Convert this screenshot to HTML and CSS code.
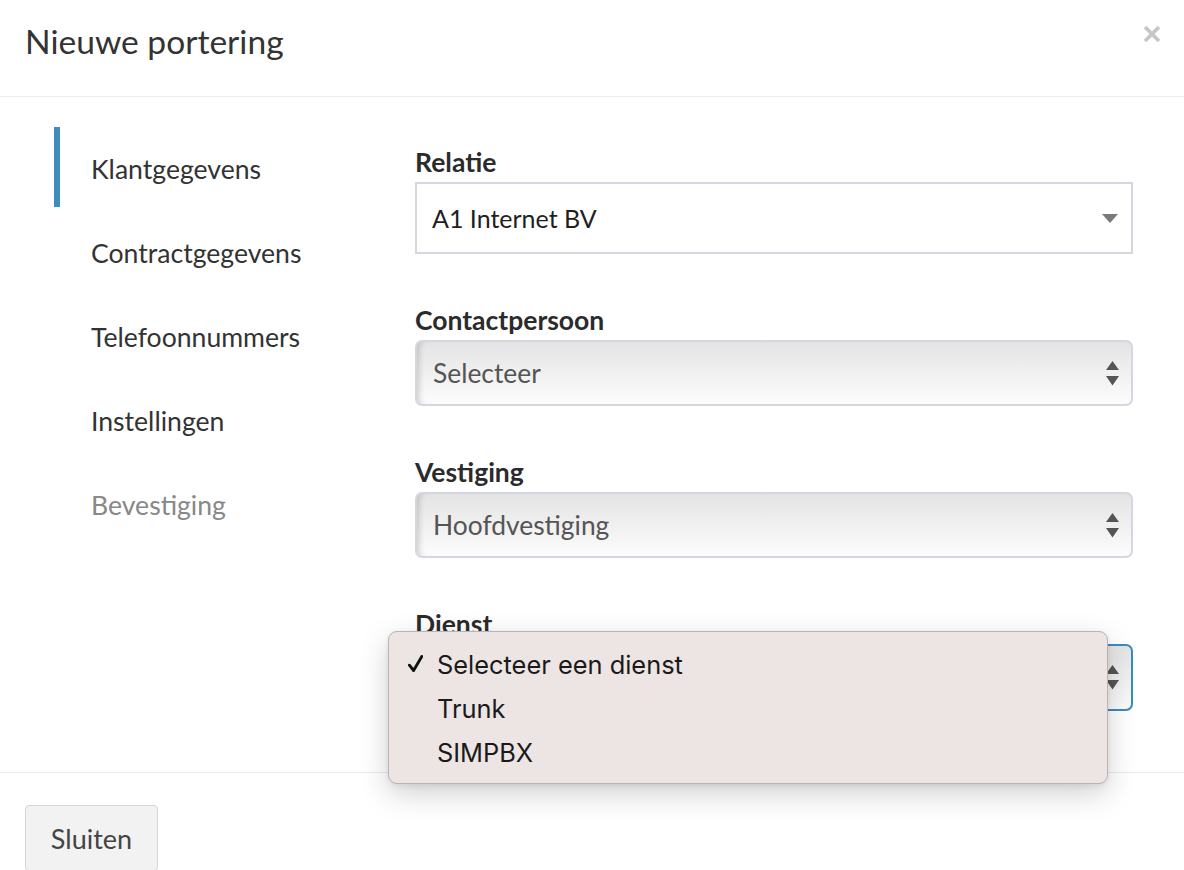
FILE: index.html
```html
<!DOCTYPE html>
<html lang="nl">
<head>
<meta charset="utf-8">
<title>Nieuwe portering</title>
<link rel="stylesheet" href="styles.css">
</head>
<body>
<div class="modal">
  <header class="modal-header">
    <h1 class="modal-title">Nieuwe portering</h1>
    <button class="close" type="button" aria-label="Sluiten">
      <svg viewBox="0 0 18 18" width="18" height="18"><path d="M2 2 L16 16 M16 2 L2 16" stroke="#c6c6c6" stroke-width="3.6" stroke-linecap="butt"/></svg>
    </button>
  </header>
  <div class="modal-body">
    <ul class="steps">
      <li class="step active">Klantgegevens</li>
      <li class="step">Contractgegevens</li>
      <li class="step">Telefoonnummers</li>
      <li class="step">Instellingen</li>
      <li class="step disabled">Bevestiging</li>
    </ul>
    <form class="form">
      <div class="field">
        <label class="label">Relatie</label>
        <div class="select select-plain">
          <span>A1 Internet BV</span>
          <svg class="caret" viewBox="0 0 16 9" width="16" height="9"><path d="M0 0 H16 L8 9 Z" fill="#7a7a7a"/></svg>
        </div>
      </div>
      <div class="field">
        <label class="label">Contactpersoon</label>
        <div class="select select-native">
          <span>Selecteer</span>
          <svg class="updown" viewBox="0 0 13 25" width="13" height="25"><path d="M6.5 0 L13 9 H0 Z M0 15 H13 L6.5 24.5 Z" fill="#555"/></svg>
        </div>
      </div>
      <div class="field">
        <label class="label">Vestiging</label>
        <div class="select select-native">
          <span>Hoofdvestiging</span>
          <svg class="updown" viewBox="0 0 13 25" width="13" height="25"><path d="M6.5 0 L13 9 H0 Z M0 15 H13 L6.5 24.5 Z" fill="#555"/></svg>
        </div>
      </div>
      <div class="field">
        <label class="label">Dienst</label>
        <div class="anchor">
          <div class="select select-native select-focus">
            <span></span>
            <svg class="updown" viewBox="0 0 13 25" width="13" height="25"><path d="M6.5 0 L13 9 H0 Z M0 15 H13 L6.5 24.5 Z" fill="#555"/></svg>
          </div>
          <ul class="menu">
            <li class="menu-item checked">
              <svg class="check" viewBox="0 0 15 17" width="15" height="17"><path d="M1.4 10.2 L5.6 15.5 L13.8 1.5" fill="none" stroke="#111" stroke-width="2.9" stroke-linejoin="round" stroke-linecap="round"/></svg>
              Selecteer een dienst
            </li>
            <li class="menu-item">Trunk</li>
            <li class="menu-item">SIMPBX</li>
          </ul>
        </div>
      </div>
    </form>
  </div>
  <footer class="modal-footer">
    <button class="btn" type="button">Sluiten</button>
  </footer>
</div>
</body>
</html>
```

FILE: styles.css
```css
html, body {
  margin: 0;
  padding: 0;
  background: #fff;
}

body {
  font-family: Lato, "Liberation Sans", sans-serif;
  color: #333;
}

.modal {
  width: 1184px;
}

.modal-header {
  display: flex;
  justify-content: space-between;
  align-items: flex-start;
  height: 97px;
  box-sizing: border-box;
  padding: 21px 23px 0 25px;
  border-bottom: 1px solid #ececec;
}

.modal-title {
  margin: 0;
  font-size: 33.6px;
  line-height: 40px;
  font-weight: 400;
  color: #333;
}

.close {
  margin-top: 4px;
  padding: 0;
  border: 0;
  background: none;
  width: 18px;
  height: 18px;
  display: block;
}

.close svg {
  display: block;
}

.modal-body {
  display: grid;
  grid-template-columns: 415px 1fr;
  padding-right: 51px;
}

.steps {
  list-style: none;
  margin: 0;
  padding: 30px 0 0 54px;
}

.step {
  height: 80px;
  line-height: 84px;
  margin-bottom: 4px;
  padding-left: 31px;
  border-left: 6px solid transparent;
  font-size: 26.6px;
  color: #333;
}

.step.active {
  border-left-color: #3f8dbf;
}

.step.disabled {
  color: #888;
}

.form {
  margin: 0;
  padding: 50px 0 61px;
}

.field + .field {
  margin-top: 51px;
}

.label {
  display: block;
  font-size: 26.5px;
  line-height: 30px;
  font-weight: 700;
  color: #2b2b2b;
  margin-bottom: 5px;
}

.select {
  box-sizing: border-box;
  display: flex;
  align-items: center;
  justify-content: space-between;
}

.select-plain {
  height: 72px;
  border: 2px solid #d4d7df;
  padding: 0 13px 0 15px;
  font-size: 25px;
  color: #1f1f1f;
  background: #fff;
}

.select-native {
  height: 66px;
  border: 2px solid #d4d7df;
  border-radius: 7px;
  padding: 0 12px 0 16px;
  background: linear-gradient(#e4e4e4, #fcfcfc);
  box-shadow: inset 7px 0 6px -5px rgba(0, 0, 0, 0.18);
  font-size: 26.4px;
  color: #555;
}

.select-focus {
  height: 67px;
  border-color: #3b8bc1;
}

.caret,
.updown {
  display: block;
  flex: none;
}

.anchor {
  position: relative;
}

.menu {
  position: absolute;
  left: -27px;
  top: -13px;
  width: 720px;
  box-sizing: border-box;
  margin: 0;
  padding: 11px 0 8px;
  list-style: none;
  background: #ede5e4;
  border: 1px solid #b9b3b2;
  border-radius: 9px;
  box-shadow: 0 10px 30px rgba(0, 0, 0, 0.18), 0 2px 6px rgba(0, 0, 0, 0.08);
  font-family: Inter, "Liberation Sans", sans-serif;
  font-size: 25.4px;
  color: #1a1a1a;
}

.menu-item {
  position: relative;
  height: 44px;
  line-height: 44px;
  padding-left: 48px;
}

.check {
  position: absolute;
  left: 19px;
  top: 12px;
}

.modal-footer {
  border-top: 1px solid #ececec;
  padding: 32px 25px;
}

.btn {
  display: block;
  width: 133px;
  height: 66px;
  box-sizing: border-box;
  border: 1px solid #d6d6d6;
  border-radius: 4px;
  background: #f2f2f2;
  font-family: Lato, "Liberation Sans", sans-serif;
  font-size: 27px;
  color: #444;
  padding: 0;
}
```
